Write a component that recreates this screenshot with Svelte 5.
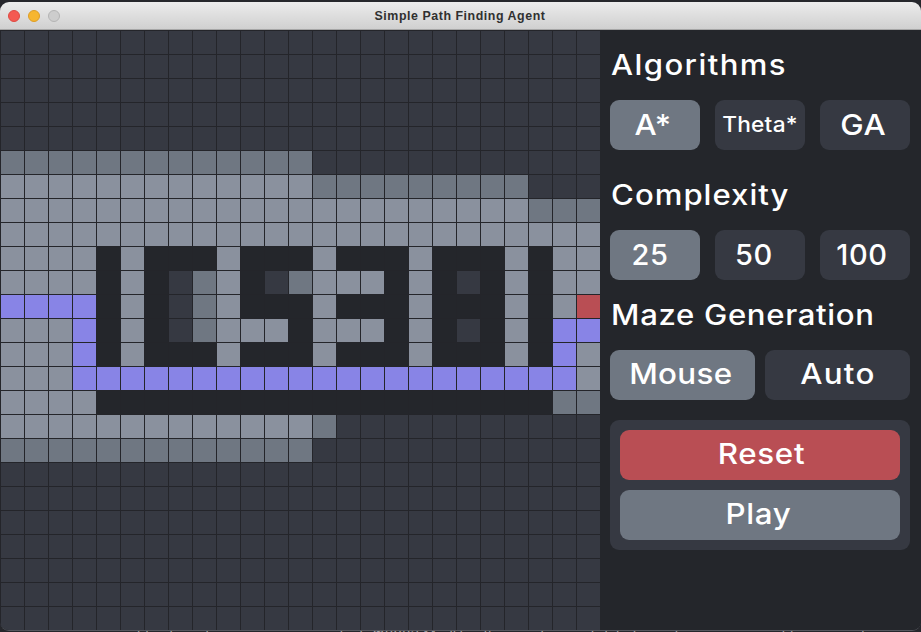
<script>
  const rows = [
    'ddddddddddddddddddddddddd',
    'ddddddddddddddddddddddddd',
    'ddddddddddddddddddddddddd',
    'ddddddddddddddddddddddddd',
    'ddddddddddddddddddddddddd',
    'mmmmmmmmmmmmmdddddddddddd',
    'lllllllllllllmmmmmmmmmddd',
    'llllllllllllllllllllllmmm',
    'lllllllllllllllllllllllll',
    'llllwlwwwlwwwlwwwlwwwlwll',
    'llllwlwdmlwdmlllwlwdwlwll',
    'ppppwlwdmlwwwlwwwlwwwlwlr',
    'lllpwlwdmlllwlllwlwdwlwpp',
    'lllpwlwwwlwwwlwwwlwwwlwpl',
    'lllpppppppppppppppppppppl',
    'llllwwwwwwwwwwwwwwwwwwwmm',
    'lllllllllllllmddddddddddd',
    'mmmmmmmmmmmmmdddddddddddd',
    'ddddddddddddddddddddddddd',
    'ddddddddddddddddddddddddd',
    'ddddddddddddddddddddddddd',
    'ddddddddddddddddddddddddd',
    'ddddddddddddddddddddddddd',
    'ddddddddddddddddddddddddd',
    'ddddddddddddddddddddddddd'
  ];
  const cells = rows.flatMap((r) => r.split(''));
  const algorithms = [
    { label: 'A*', cls: 'active wide l3 low' },
    { label: 'Theta*', cls: 'small wide low' },
    { label: 'GA', cls: 'wide l3 low' }
  ];
  const sizes = [
    { label: '25', cls: 'active l10 low' },
    { label: '50', cls: 'l12 low' },
    { label: '100', cls: 'l6 low' }
  ];
</script>

<div class="page">
  <div class="window">
    <header class="titlebar">
      <div class="lights">
        <span class="light red"></span>
        <span class="light yellow"></span>
        <span class="light gray"></span>
      </div>
      <span class="title">Simple Path Finding Agent</span>
    </header>
    <main class="content">
      <div class="grid">
        {#each cells as c}
          <div class="cell {c}"></div>
        {/each}
      </div>
      <aside class="panel">
        <h2 class="h-algo">Algorithms</h2>
        <div class="row three">
          {#each algorithms as a}
            <button class="btn {a.cls}"><span>{a.label}</span></button>
          {/each}
        </div>
        <h2 class="h-comp">Complexity</h2>
        <div class="row three">
          {#each sizes as a}
            <button class="btn {a.cls}"><span>{a.label}</span></button>
          {/each}
        </div>
        <h2 class="h-maze">Maze Generation</h2>
        <div class="row two">
          <button class="btn active wide l3 tight"><span>Mouse</span></button>
          <button class="btn wide loose"><span>Auto</span></button>
        </div>
        <div class="card">
          <button class="btn reset wide r3"><span>Reset</span></button>
          <button class="btn active wide l3"><span>Play</span></button>
        </div>
      </aside>
    </main>
  </div>
  <div class="below"><p>notifications to improve your product. ©2023 Modlibs, the maintainer of data for making your project bigger, and yet smaller and simpler</p></div>
</div>

<style>
  :global(body) {
    margin: 0;
    background: #1f2025;
  }
  .page {
    width: 921px;
    height: 632px;
    overflow: hidden;
    background: #26272c;
    padding-top: 2px;
    box-sizing: border-box;
    font-family: Inter, "Open Sans", sans-serif;
  }
  .window {
    height: 629px;
    border-radius: 9px;
    overflow: hidden;
    border-bottom: 1px solid #55575e;
    box-sizing: border-box;
    background: #24252a;
  }
  .titlebar {
    height: 28px;
    box-sizing: border-box;
    border-bottom: 1px solid #a6a6a6;
    background: linear-gradient(#ececec, #d0d0d0);
    display: grid;
    align-items: center;
    justify-items: center;
    position: relative;
  }
  .lights {
    position: absolute;
    left: 8px;
    top: 8px;
    display: flex;
    gap: 8px;
  }
  .light {
    width: 12px;
    height: 12px;
    box-sizing: border-box;
    border-radius: 50%;
    border: 1px solid;
  }
  .red { background: #f45a52; border-color: #dd4a43; }
  .yellow { background: #f6b630; border-color: #dd9d26; }
  .gray { background: #cdcdcd; border-color: #b4b4b4; }
  .title {
    font: bold 12.4px "Liberation Sans", sans-serif;
    color: #303030;
    letter-spacing: 0.55px;
    margin-right: 1px;
  }
  .content {
    display: flex;
    height: 600px;
  }
  .grid {
    width: 600px;
    height: 600px;
    display: grid;
    grid-template-columns: repeat(25, 24px);
    grid-template-rows: repeat(25, 24px);
    flex: none;
  }
  .cell {
    box-sizing: border-box;
    border-top: 1px solid #24252a;
    border-left: 1px solid #24252a;
  }
  .d { background: #363942; }
  .m { background: #6f7782; }
  .l { background: #8a919e; }
  .p { background: #8884e6; }
  .w { background: #24262b; }
  .r { background: #b94e54; }
  .panel {
    flex: 1;
    background: #24262b;
    padding: 0 11px 0 10px;
    color: #fff;
  }
  h2 {
    margin: 0;
    font-weight: 500;
    font-size: 28px;
    line-height: 34px;
    padding-left: 1px;
    transform: scaleX(1.11);
    transform-origin: left center;
    white-space: nowrap;
  }
  .h-algo { margin-top: 18px; letter-spacing: 1.26px; }
  .h-comp { margin-top: 28px; letter-spacing: 0.93px; }
  .h-maze { margin-top: 18px; letter-spacing: 0.62px; }
  .row {
    display: grid;
    margin-top: 18px;
    height: 50px;
  }
  .three { grid-template-columns: repeat(3, 90px); gap: 15px; }
  .two { grid-template-columns: repeat(2, 145px); gap: 10px; }
  .btn {
    border: 0;
    margin: 0;
    padding: 0 0 3px;
    height: 50px;
    border-radius: 9px;
    background: #363942;
    color: #fff;
    font-family: inherit;
    font-weight: 500;
    font-size: 29px;
    letter-spacing: 0.6px;
  }
  .btn span { display: inline-block; white-space: nowrap; }
  .btn.wide span { transform: scaleX(1.08); }
  .btn.small { font-size: 21px; letter-spacing: 0.2px; }
  .btn.tight { letter-spacing: 0.3px; }
  .btn.loose { letter-spacing: 1.2px; }
  .btn.low { padding-bottom: 1px; }
  .btn.l3 { padding-right: 3px; }
  .btn.l6 { padding-right: 6px; }
  .btn.l10 { padding-right: 10px; }
  .btn.l12 { padding-right: 12px; }
  .btn.r3 { padding-left: 3px; }
  .btn.active { background: #6f7782; }
  .btn.reset { background: #b94e54; }
  .card {
    margin-top: 20px;
    padding: 10px;
    background: #363942;
    border-radius: 9px;
    display: grid;
    gap: 10px;
  }
  .below {
    height: 1px;
    overflow: hidden;
    padding-left: 120px;
    width: 760px;
  }
  .below p {
    margin: -3px 0 0;
    font-size: 14px;
    line-height: 14px;
    color: #a0a0a0;
    white-space: nowrap;
  }
</style>
